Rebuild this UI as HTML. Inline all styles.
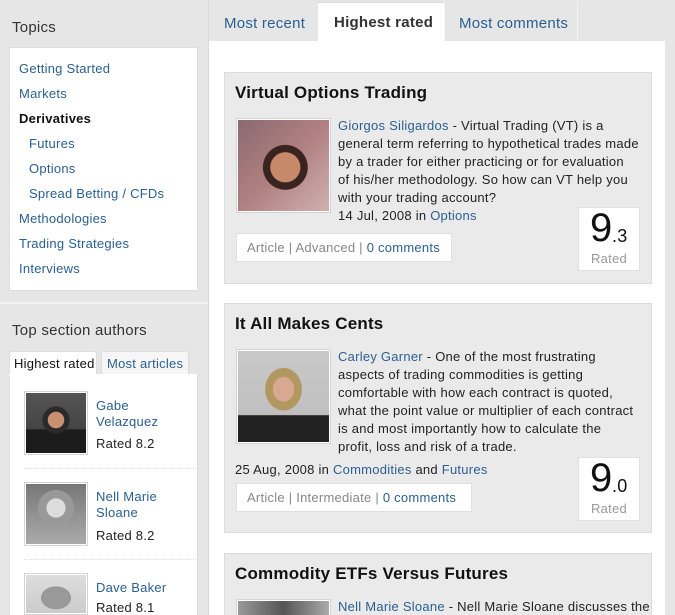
<!DOCTYPE html>
<html style="width:675px;height:615px;overflow:hidden"><head><style>
*{margin:0;padding:0;box-sizing:border-box}
body{width:675px;height:615px;overflow:hidden;background:#e6e6e6;font-family:"Liberation Sans",Tahoma,sans-serif;font-size:13px;letter-spacing:0.25px;color:#222;position:relative}
.a{position:absolute;white-space:nowrap}
a,.l{color:#2a5f92;text-decoration:none}
.card{position:absolute;left:224px;width:428px;background:#eaeaea;border:1px solid #dcdcdc;overflow:hidden}
.card h2{position:absolute;left:10px;top:10px;font-size:17px;font-weight:bold;color:#111;letter-spacing:0.2px}
.ph{position:absolute;width:93px;height:93px;border:1px solid #fff;outline:1px solid #d4d4d4}
.meta{position:absolute;background:#fff;border:1px solid #e0e0e0;height:29px;padding:6px 10px;color:#888}
.rate{position:absolute;width:62px;height:64px;background:#fff;border:1px solid #e0e0e0;text-align:center}
.rate b{position:absolute;left:11px;top:-2px;font-size:40px;font-weight:normal;color:#111}
.rate i{position:absolute;left:33px;top:18px;font-style:normal;font-size:18px;color:#111}
.rate span{position:absolute;left:0;width:60px;top:43px;color:#999}
.t{position:absolute;line-height:18px;white-space:nowrap}
</style></head><body>
<div class="a" style="left:12px;top:19px;font-size:15px;color:#333">Topics</div>
<div style="position:absolute;left:9px;top:47px;width:189px;height:244px;background:#fff;border:1px solid #ddd"></div>
<div class="a l" style="left:19px;top:61px">Getting Started</div>
<div class="a l" style="left:19px;top:86px">Markets</div>
<div class="a" style="left:19px;top:111px;font-weight:bold;color:#111">Derivatives</div>
<div class="a l" style="left:29px;top:136px">Futures</div>
<div class="a l" style="left:29px;top:161px">Options</div>
<div class="a l" style="left:29px;top:186px">Spread Betting / CFDs</div>
<div class="a l" style="left:19px;top:211px">Methodologies</div>
<div class="a l" style="left:19px;top:236px">Trading Strategies</div>
<div class="a l" style="left:19px;top:261px">Interviews</div>
<div style="position:absolute;left:0;top:302px;width:208px;height:2px;background:#f4f4f4"></div>
<div class="a" style="left:12px;top:322px;font-size:15px;color:#333">Top section authors</div>
<div style="position:absolute;left:9px;top:351px;width:88px;height:25px;background:#fff;border:1px solid #ddd;border-bottom:none;border-radius:3px 3px 0 0"></div>
<div class="a" style="left:14px;top:356px;color:#111">Highest rated</div>
<div style="position:absolute;left:101px;top:351px;width:88px;height:23px;background:#f6f6f6;border:1px solid #ddd;border-bottom:none;border-radius:3px 3px 0 0"></div>
<div class="a l" style="left:107px;top:356px">Most articles</div>
<div style="position:absolute;left:9px;top:374px;width:189px;height:241px;background:#fff;border-left:1px solid #ddd;border-right:1px solid #ddd"></div>
<div style="position:absolute;left:9px;top:374px;width:89px;height:2px;background:#fff"></div>
<div class="ph" style="left:25px;top:392px;width:62px;height:62px;background:radial-gradient(circle at 50% 45%,#c89070 0 18%,#2a2a2a 19% 30%,transparent 31%),linear-gradient(#555,#444 60%,#1c1c1c 61%)"></div>
<div class="a l" style="left:96px;top:398px">Gabe</div>
<div class="a l" style="left:96px;top:414px">Velazquez</div>
<div class="a" style="left:96px;top:436px">Rated 8.2</div>
<div style="position:absolute;left:24px;top:468px;width:172px;border-top:1px dotted #ddd"></div>
<div class="ph" style="left:25px;top:483px;width:62px;height:62px;background:radial-gradient(circle at 50% 40%,#ddd 0 20%,#999 21% 38%,transparent 39%),linear-gradient(#777,#aaa)"></div>
<div class="a l" style="left:96px;top:489px">Nell Marie</div>
<div class="a l" style="left:96px;top:505px">Sloane</div>
<div class="a" style="left:96px;top:528px">Rated 8.2</div>
<div style="position:absolute;left:24px;top:559px;width:172px;border-top:1px dotted #ddd"></div>
<div class="ph" style="left:25px;top:574px;width:62px;height:40px;background:radial-gradient(ellipse at 50% 60%,#999 0 35%,transparent 36%),linear-gradient(#ddd,#ccc)"></div>
<div class="a l" style="left:96px;top:580px">Dave Baker</div>
<div class="a" style="left:96px;top:600px">Rated 8.1</div>
<div style="position:absolute;left:208px;top:0;width:1px;height:615px;background:#d8d8d8"></div>
<div style="position:absolute;left:209px;top:41px;width:456px;height:574px;background:#fff"></div>
<div style="position:absolute;left:318px;top:2px;width:126px;height:40px;background:#fff;border-top:1px solid #ddd"></div>
<div style="position:absolute;left:444px;top:2px;width:134px;height:39px;border-left:1px solid #f4f4f4;border-right:1px solid #f4f4f4"></div>
<div class="a l" style="left:224px;top:15px;font-size:15px">Most recent</div>
<div class="a" style="left:334px;top:14px;font-size:15px;font-weight:bold;color:#333">Highest rated</div>
<div class="a l" style="left:459px;top:15px;font-size:15px">Most comments</div>
<div class="card" style="top:72px;height:212px">
<h2>Virtual Options Trading</h2>
<div class="ph" style="left:12px;top:46px;background:radial-gradient(ellipse at 52% 52%,#c68a6a 0 22%,#3a2420 23% 33%,transparent 34%),linear-gradient(135deg,#8a6a70,#b08080 50%,#d0b0b0)"></div>
<div class="t" style="left:113px;top:44px"><a>Giorgos Siligardos</a> - Virtual Trading (VT) is a<br>general term referring to hypothetical trades made<br>by a trader for either practicing or for evaluation<br>of his/her methodology. So how can VT help you<br>with your trading account?<br>14 Jul, 2008 in <a>Options</a></div>
<div class="meta" style="left:11px;top:160px;width:216px">Article | Advanced | <a>0 comments</a></div>
<div class="rate" style="left:353px;top:134px"><b>9</b><i>.3</i><span>Rated</span></div>
</div>
<div class="card" style="top:303px;height:230px">
<h2>It All Makes Cents</h2>
<div class="ph" style="left:12px;top:46px;background:radial-gradient(ellipse at 50% 42%,#d9a890 0 16%,#b09860 17% 28%,transparent 29%),linear-gradient(#c8c8c8,#c0c0c0 70%,#222 71%)"></div>
<div class="t" style="left:113px;top:44px"><a>Carley Garner</a> - One of the most frustrating<br>aspects of trading commodities is getting<br>comfortable with how each contract is quoted,<br>what the point value or multiplier of each contract<br>is and most importantly how to calculate the<br>profit, loss and risk of a trade.</div>
<div class="t" style="left:10px;top:157px">25 Aug, 2008 in <a>Commodities</a> and <a>Futures</a></div>
<div class="meta" style="left:11px;top:179px;width:236px">Article | Intermediate | <a>0 comments</a></div>
<div class="rate" style="left:353px;top:153px"><b>9</b><i>.0</i><span>Rated</span></div>
</div>
<div class="card" style="top:553px;height:62px;border-bottom:none">
<h2>Commodity ETFs Versus Futures</h2>
<div class="ph" style="left:12px;top:46px;height:16px;background:linear-gradient(90deg,#999,#555,#aaa)"></div>
<div class="t" style="left:113px;top:44px"><a>Nell Marie Sloane</a> - Nell Marie Sloane discusses the</div>
</div>
</body></html>
